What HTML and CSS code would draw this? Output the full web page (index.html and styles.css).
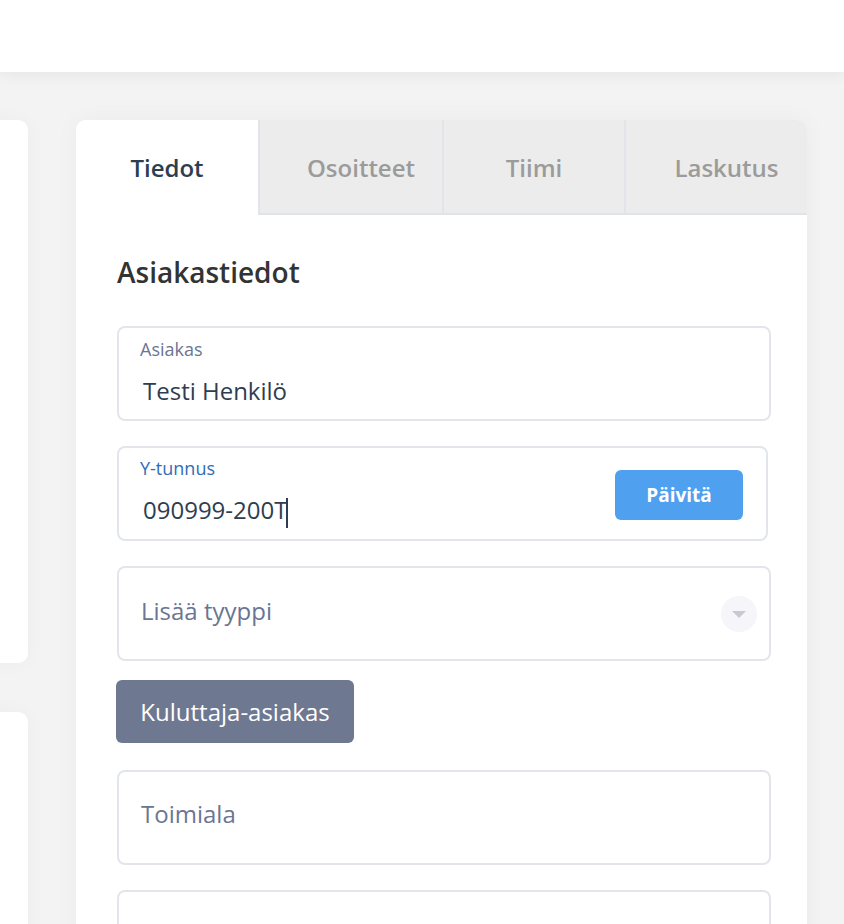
FILE: index.html
```html
<!DOCTYPE html>
<html>

<head>
    <meta charset="utf-8">
    <title>Asiakastiedot</title>
    <link rel="stylesheet" href="styles.css">
</head>

<body>
    <div class="top_bar"></div>

    <div class="page">
        <div class="side_column">
            <div class="side_card side_card_first"></div>
            <div class="side_card side_card_second"></div>
        </div>

        <div class="main_card">
            <div class="tabs">
                <div class="tab tab_active">Tiedot</div>
                <div class="tab tab_shifted">Osoitteet</div>
                <div class="tab">Tiimi</div>
                <div class="tab tab_shifted">Laskutus</div>
            </div>

            <div class="card_body">
                <h2 class="section_title">Asiakastiedot</h2>

                <div class="field">
                    <div class="field_label">Asiakas</div>
                    <div class="field_value">Testi Henkilö</div>
                </div>

                <div class="field field_row field_narrow">
                    <div class="field_main">
                        <div class="field_label field_label_active">Y-tunnus</div>
                        <div class="field_value">090999-200T<span class="caret"></span></div>
                    </div>
                    <button class="update_button">Päivitä</button>
                </div>

                <div class="field field_select">
                    <div class="placeholder">Lisää tyyppi</div>
                    <div class="select_arrow"><span></span></div>
                </div>

                <button class="tag_button">Kuluttaja-asiakas</button>

                <div class="field field_select field_toimiala">
                    <div class="placeholder">Toimiala</div>
                </div>

                <div class="field field_select"></div>
            </div>
        </div>
    </div>
</body>

</html>
```

FILE: styles.css
```css
body {
    margin: 0;
    background: #f3f3f3;
    font-family: "Open Sans", "Noto Sans", sans-serif;
    overflow: hidden;
}

.top_bar {
    height: 72px;
    background: #ffffff;
    box-shadow: 0 3px 14px rgba(0, 0, 0, 0.06);
    position: relative;
}

.page {
    display: flex;
    align-items: flex-start;
    padding-top: 48px;
}

.side_column {
    width: 300px;
    margin-left: -272px;
    flex-shrink: 0;
}

.side_card {
    background: #ffffff;
    border-radius: 10px;
    box-shadow: 0 0 20px rgba(0, 0, 0, 0.03);
}

.side_card_first {
    height: 543px;
}

.side_card_second {
    height: 400px;
    margin-top: 49px;
}

.main_card {
    width: 731px;
    margin-left: 48px;
    background: #ffffff;
    border-radius: 10px;
    box-shadow: 0 0 24px rgba(0, 0, 0, 0.04);
    overflow: hidden;
    flex-shrink: 0;
}

.tabs {
    display: grid;
    grid-template-columns: 182px 184px 182px 183px;
}

.tab {
    box-sizing: border-box;
    height: 95px;
    padding-top: 2px;
    display: flex;
    align-items: center;
    justify-content: center;
    font-size: 24px;
    font-weight: 600;
    color: #9b9b9b;
    background: #ececec;
    border-left: 2px solid #e1e5e9;
    border-bottom: 2px solid #dfe4e8;
}

.tab_shifted {
    padding-left: 20px;
}

.tab_active {
    background: #ffffff;
    color: #2c3e50;
    border-left: none;
    border-bottom-color: #ffffff;
}

.card_body {
    padding: 41px 36px 0 41px;
}

.section_title {
    margin: 0 0 38px 0;
    font-size: 28px;
    line-height: 32px;
    font-weight: 600;
    color: #333333;
}

.field {
    box-sizing: border-box;
    height: 95px;
    border: 2px solid #e2e6ea;
    border-radius: 8px;
    padding: 10px 22px 13px 21px;
    margin-bottom: 25px;
}

.field_narrow {
    width: 651px;
}

.field_row {
    display: flex;
    align-items: center;
    padding-right: 23px;
}

.field_main {
    flex: 1;
}

.field_label {
    font-size: 18px;
    line-height: 22px;
    color: #6b7592;
}

.field_label_active {
    color: #2f6db4;
}

.field_value {
    margin-top: 16px;
    padding-left: 3px;
    font-size: 24px;
    line-height: 30px;
    color: #2f3d50;
}

.caret {
    display: inline-block;
    width: 0;
    height: 30px;
    border-left: 2px solid #2f3d50;
    vertical-align: -9px;
    margin-left: -1px;
}

.update_button {
    width: 128px;
    height: 50px;
    border: none;
    border-radius: 6px;
    background: #4fa0ef;
    color: #ffffff;
    font-family: "Open Sans", "Noto Sans", sans-serif;
    font-size: 19px;
    font-weight: 700;
    margin-top: 6px;
}

.field_select {
    display: flex;
    align-items: center;
    padding: 0 12px 0 22px;
}

.placeholder {
    flex: 1;
    font-size: 24px;
    color: #6b7592;
    margin-top: -6px;
}

.field_toimiala .placeholder {
    margin-top: -8px;
}

.select_arrow {
    width: 36px;
    height: 36px;
    border-radius: 50%;
    background: #f5f5fa;
    display: flex;
    align-items: center;
    justify-content: center;
}

.select_arrow span {
    width: 0;
    height: 0;
    border-left: 7px solid transparent;
    border-right: 7px solid transparent;
    border-top: 7px solid #c9c9d3;
    margin-top: 2px;
}

.tag_button {
    display: block;
    width: 238px;
    height: 63px;
    margin: -6px 0 27px -1px;
    border: none;
    border-radius: 6px;
    background: #6e7891;
    color: #ffffff;
    font-family: "Open Sans", "Noto Sans", sans-serif;
    font-size: 24px;
}
```
